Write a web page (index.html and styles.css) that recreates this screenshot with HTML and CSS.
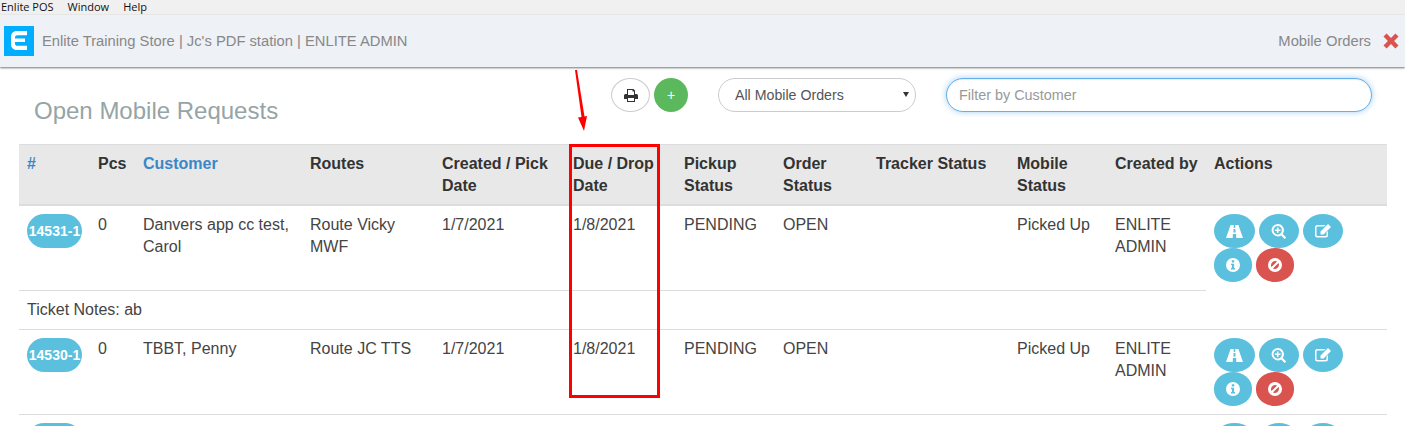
FILE: index.html
```html
<!DOCTYPE html>
<html lang="en">
<head>
  <meta charset="UTF-8">
  <meta name="viewport" content="width=device-width, initial-scale=1.0">
  <title>Enlite POS</title>
  <link rel="stylesheet" href="styles.css">
</head>
<body>
  <svg class="icon-defs" width="0" height="0">
    <symbol id="i-road" viewBox="0 0 17 13"><path d="M4.6 0h3.2l-.1 3h1.6l-.1-3h3.2L17 13h-6.7l-.2-4H6.900l-.2 4H0zM7.600 4l-.2 3.500h2.200L9.400 4z" fill-rule="evenodd"/></symbol>
    <symbol id="i-search" viewBox="0 0 15 15"><path d="M6.200 0a6.200 6.200 0 0 1 5 9.900l3.500 3.500-1.500 1.500-3.500-3.500A6.200 6.200 0 1 1 6.200 0zm0 2a4.200 4.200 0 1 0 0 8.400 4.200 4.200 0 0 0 0-8.400zM5.400 3.500h1.600v2h2v1.500h-2v2H5.400v-2h-2V5.500h2z" fill-rule="evenodd"/></symbol>
    <symbol id="i-edit" viewBox="0 0 16 14"><path d="M2.500 1h8l-1.500 1.500H2.500a1 1 0 0 0-1 1v7.500a1 1 0 0 0 1 1h8a1 1 0 0 0 1-1V8.500L13 7v4a2.500 2.500 0 0 1-2.500 2.500h-8A2.500 2.500 0 0 1 0 11V3.500A2.500 2.500 0 0 1 2.500 1zM13 0l3 3-7.500 7.500H5.500v-3z" fill-rule="evenodd"/></symbol>
    <symbol id="i-info" viewBox="0 0 14 14"><path d="M7 0a7 7 0 1 1 0 14A7 7 0 0 1 7 0zM5.800 2.300v2.200h2.400V2.300zM5 5.700v1.300h.9v3H5v1.400h4V10h-.9V5.700z" fill-rule="evenodd"/></symbol>
    <symbol id="i-ban" viewBox="0 0 14 14"><path d="M7 0a7 7 0 1 1 0 14A7 7 0 0 1 7 0zM3.500 9.100l5.600-5.600A4.200 4.200 0 0 0 3.500 9.100zM4.900 10.500a4.200 4.200 0 0 0 5.600-5.600z" fill-rule="evenodd"/></symbol>
  </svg>

  <div class="menubar">
    <span>Enlite POS</span>
    <span>Window</span>
    <span>Help</span>
  </div>

  <header class="appbar">
    <div class="logo">
      <svg width="30" height="30" viewBox="0 0 30 30"><path d="M13 5h10v4.200H13.500c-1.500 0-2.500.8-2.500 2.300v1h10v3.500H11v1.500c0 1.500 1 2.300 2.500 2.300H23V24H13c-4 0-6-2.500-6-6v-7c0-3.500 2-6 6-6z" fill="#fff"/></svg>
    </div>
    <span class="store-name">Enlite Training Store | Jc's PDF station | ENLITE ADMIN</span>
    <span class="page-name">Mobile Orders</span>
    <svg class="close-icon" width="16" height="16" viewBox="0 0 16 16"><path d="M3.600.5 8 4.900 12.400.5l3.100 3.100L11.100 8l4.400 4.400-3.100 3.100L8 11.100l-4.400 4.400-3.100-3.100L4.900 8 .5 3.600z"/></svg>
  </header>

  <div class="toolbar">
    <h1 class="page-title">Open Mobile Requests</h1>
    <button class="tool-btn print-btn">
      <svg width="14" height="13" viewBox="0 0 14 13"><path d="M3 0h6.500L11 1.500V5h1.500A1.500 1.500 0 0 1 14 6.500V10h-3v3H3v-3H0V6.500A1.500 1.500 0 0 1 1.500 5H3zM4 1v5h6V2.500H8.500V1zM4 9v3h6V9z" fill-rule="evenodd"/></svg>
    </button>
    <button class="tool-btn add-btn">+</button>
    <div class="select-wrap">
      <select class="order-select"><option>All Mobile Orders</option></select>
    </div>
    <input class="customer-filter" type="text" placeholder="Filter by Customer">
  </div>

  <div class="table-wrap">
    <table class="orders">
      <colgroup>
        <col class="c-num"><col class="c-pcs"><col class="c-customer"><col class="c-routes"><col class="c-created">
        <col class="c-due"><col class="c-pickup"><col class="c-order"><col class="c-tracker"><col class="c-mobile">
        <col class="c-by"><col class="c-actions">
      </colgroup>
      <thead>
        <tr>
          <th class="sortable">#</th>
          <th>Pcs</th>
          <th class="sortable">Customer</th>
          <th>Routes</th>
          <th>Created / Pick Date</th>
          <th>Due / Drop Date</th>
          <th>Pickup Status</th>
          <th>Order Status</th>
          <th>Tracker Status</th>
          <th>Mobile Status</th>
          <th>Created by</th>
          <th>Actions</th>
        </tr>
      </thead>
      <tbody>
        <tr class="order-row">
          <td><span class="ticket">14531-1</span></td>
          <td>0</td>
          <td>Danvers app cc test, Carol</td>
          <td>Route Vicky MWF</td>
          <td>1/7/2021</td>
          <td>1/8/2021</td>
          <td>PENDING</td>
          <td>OPEN</td>
          <td></td>
          <td>Picked Up</td>
          <td>ENLITE ADMIN</td>
          <td rowspan="2">
            <div class="actions">
              <button class="act"><svg class="w17"><use href="#i-road"/></svg></button>
              <button class="act"><svg class="w15"><use href="#i-search"/></svg></button>
              <button class="act"><svg class="w16"><use href="#i-edit"/></svg></button>
              <button class="act"><svg class="w14"><use href="#i-info"/></svg></button>
              <button class="act danger"><svg class="w14"><use href="#i-ban"/></svg></button>
            </div>
          </td>
        </tr>
        <tr>
          <td colspan="11">Ticket Notes: ab</td>
        </tr>
        <tr class="order-row">
          <td><span class="ticket">14530-1</span></td>
          <td>0</td>
          <td>TBBT, Penny</td>
          <td>Route JC TTS</td>
          <td>1/7/2021</td>
          <td>1/8/2021</td>
          <td>PENDING</td>
          <td>OPEN</td>
          <td></td>
          <td>Picked Up</td>
          <td>ENLITE ADMIN</td>
          <td>
            <div class="actions">
              <button class="act"><svg class="w17"><use href="#i-road"/></svg></button>
              <button class="act"><svg class="w15"><use href="#i-search"/></svg></button>
              <button class="act"><svg class="w16"><use href="#i-edit"/></svg></button>
              <button class="act"><svg class="w14"><use href="#i-info"/></svg></button>
              <button class="act danger"><svg class="w14"><use href="#i-ban"/></svg></button>
            </div>
          </td>
        </tr>
        <tr class="order-row">
          <td><span class="ticket"></span></td>
          <td colspan="10"></td>
          <td>
            <div class="actions">
              <button class="act"><svg class="w17"><use href="#i-road"/></svg></button>
              <button class="act"><svg class="w15"><use href="#i-search"/></svg></button>
              <button class="act"><svg class="w16"><use href="#i-edit"/></svg></button>
            </div>
          </td>
        </tr>
      </tbody>
    </table>
  </div>

  <!-- red markup drawn over the screenshot -->
  <svg class="markup" width="1405" height="426" viewBox="0 0 1405 426">
    <path d="M575 70 577 70 584.500 116.500 587 116 584 131 578 117.500 581.500 117z" fill="#f00"/>
    <rect x="570.500" y="145.500" width="88" height="251" fill="none" stroke="#f00" stroke-width="3"/>
  </svg>
</body>
</html>
```

FILE: styles.css
```css
html, body {
  height: 100%;
}

body {
  display: flex;
  flex-direction: column;
  margin: 0;
  position: relative;
  overflow: hidden;
  background-color: #fff;
  color: #444;
  font-family: "Liberation Sans", Arial, sans-serif;
  font-size: 16px;
  line-height: 22px;
}

.icon-defs {
  display: none;
}

.menubar {
  display: flex;
  flex: none;
  gap: 14px;
  height: 15px;
  padding-left: 1px;
  background-color: #f0f0f0;
  color: #111;
  font-family: "Open Sans", sans-serif;
  font-size: 11px;
  line-height: 13px;
}

.appbar {
  display: flex;
  flex: none;
  align-items: center;
  height: 52px;
  padding: 0 6px 0 4px;
  background-color: #eef1f6;
  box-shadow: 0 1px 2px rgba(0, 0, 0, 0.55);
  color: #888;
  font-size: 14.75px;
}

.logo {
  display: flex;
  width: 30px;
  height: 30px;
  margin-right: 8px;
  background-color: #00aeff;
}

.store-name {
  flex: 1;
}

.close-icon {
  margin-left: 12px;
  fill: #d9534f;
}

.toolbar {
  display: flex;
  flex: none;
  align-items: flex-start;
  height: 77px;
  padding-top: 11px;
  box-sizing: border-box;
}

.page-title {
  width: 577px;
  margin: 19px 0 0 34px;
  color: #95a5a6;
  font-size: 24px;
  font-weight: normal;
  line-height: 28px;
}

.tool-btn {
  display: flex;
  align-items: center;
  justify-content: center;
  height: 34px;
  padding: 0;
  border-radius: 50%;
  font-family: inherit;
}

.print-btn {
  width: 39px;
  margin-right: 4px;
  background-color: #fff;
  border: 1px solid #ccc;
  fill: #333;
}

.add-btn {
  width: 34px;
  margin-right: 30px;
  background-color: #5cb85c;
  border: none;
  color: #fff;
  font-size: 14px;
}

.select-wrap {
  position: relative;
  margin-right: 30px;
}

.select-wrap::after {
  content: "";
  position: absolute;
  top: 14px;
  right: 7px;
  border-top: 5px solid #333;
  border-left: 3px solid transparent;
  border-right: 3px solid transparent;
}

.order-select {
  display: block;
  width: 198px;
  height: 34px;
  padding: 0 16px;
  appearance: none;
  background-color: #fff;
  border: 1px solid #ccc;
  border-radius: 17px;
  color: #555;
  font-family: inherit;
  font-size: 14.2px;
}

.customer-filter {
  width: 426px;
  height: 34px;
  padding: 0 12px;
  box-sizing: border-box;
  border: 1px solid #66afe9;
  border-radius: 17px;
  box-shadow: inset 0 1px 1px rgba(0, 0, 0, 0.075), 0 0 6px rgba(102, 175, 233, 0.6);
  color: #555;
  font-family: inherit;
  font-size: 14.4px;
  outline: none;
}

.customer-filter::placeholder {
  color: #999;
}

.table-wrap {
  flex: 1;
  min-height: 0;
  overflow: hidden;
  padding: 0 18px 0 19px;
}

.orders {
  width: 100%;
  table-layout: fixed;
  border-collapse: separate;
  border-spacing: 0;
}

.c-num { width: 71px; }
.c-pcs { width: 45px; }
.c-customer { width: 167px; }
.c-routes { width: 132px; }
.c-created { width: 131px; }
.c-due { width: 111px; }
.c-pickup { width: 99px; }
.c-order { width: 93px; }
.c-tracker { width: 141px; }
.c-mobile { width: 98px; }
.c-by { width: 99px; }
.c-actions { width: 181px; }

.orders th {
  padding: 8px 8px 7px;
  background-color: #e8e8e8;
  border-top: 1px solid #ddd;
  border-bottom: 2px solid #ddd;
  color: #333;
  font-weight: bold;
  text-align: left;
  vertical-align: top;
}

.orders th.sortable {
  color: #3a87c8;
}

.orders td {
  padding: 8px;
  border-bottom: 1px solid #ddd;
  vertical-align: top;
}

.order-row {
  height: 85px;
}

.ticket {
  display: block;
  width: 55px;
  height: 34px;
  background-color: #5bc0de;
  border-radius: 17px;
  color: #fff;
  font-size: 14px;
  font-weight: bold;
  line-height: 34px;
  text-align: center;
  white-space: nowrap;
}

.actions {
  display: flex;
  flex-wrap: wrap;
  column-gap: 4px;
}

.act {
  display: flex;
  align-items: center;
  justify-content: center;
  height: 34px;
  padding: 0 12px;
  background-color: #5bc0de;
  border: none;
  border-radius: 20px / 17px;
  fill: #fff;
}

.act.danger {
  background-color: #d9534f;
}

.w17 { width: 17px; height: 13px; }
.w16 { width: 16px; height: 14px; }
.w15 { width: 16px; height: 15px; }
.w14 { width: 14px; height: 14px; }

.markup {
  position: absolute;
  top: 0;
  left: 0;
  pointer-events: none;
}
```
